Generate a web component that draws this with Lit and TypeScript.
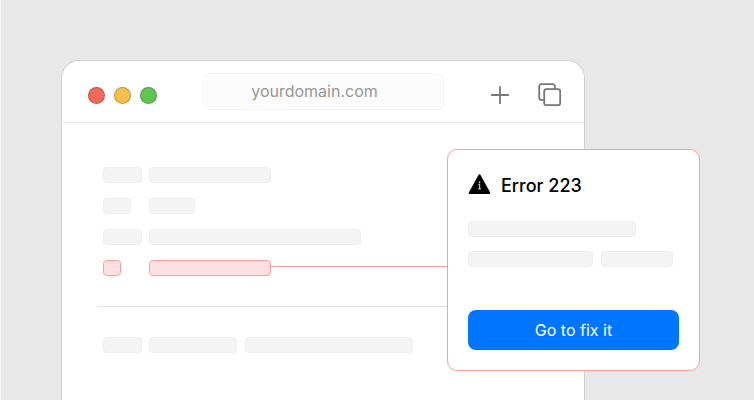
import { LitElement, html, svg, css } from "lit";
import { customElement } from "lit/decorators.js";
import { styleMap } from "lit/directives/style-map.js";

const copyIcon = svg`
  <rect x="6.200" y="6.200" width="16" height="16" rx="2.200"></rect>
  <path d="M6.200 16.900H3.400A2.200 2.200 0 0 1 1.200 14.700V3.400A2.200 2.200 0 0 1 3.400 1.200H14.700A2.200 2.200 0 0 1 16.900 3.400V6.200"></path>
`;

@customElement("app-root")
export class AppRoot extends LitElement {
  static styles = css`
    :host {
      display: flex;
      box-sizing: border-box;
      min-height: 100vh;
      padding: 60px 169px 0 60px;
      background: #e8e8e8;
      border-left: 1px solid #f6f6f6;
      font-family: Inter, "Liberation Sans", sans-serif;
      overflow: hidden;
    }
    * {
      box-sizing: border-box;
    }
    .window {
      position: relative;
      flex: 1;
      min-width: 0;
      background: #fff;
      border: 1px solid #d0d0d0;
      border-bottom: 0;
      border-radius: 18px 18px 0 0;
    }
    .toolbar {
      display: flex;
      align-items: center;
      height: 62px;
      padding: 0 22px 0 26px;
      border-bottom: 1px solid #e9e9e9;
    }
    .lights,
    .tools {
      display: flex;
      align-items: center;
    }
    .lights {
      gap: 9px;
      padding-top: 8px;
    }
    .light {
      width: 17px;
      height: 17px;
      border-radius: 50%;
      border: 1px solid rgba(0, 0, 0, 0.22);
    }
    .close {
      background: #ec6a5e;
    }
    .minimise {
      background: #f4bf4f;
    }
    .zoom {
      background: #61c554;
    }
    .address {
      flex: 1;
      min-width: 0;
      height: 37px;
      margin: 0 46px;
      padding: 0 18px 2px 0;
      border: 1px solid #f5f5f5;
      border-radius: 6px;
      background: #fcfcfc;
      color: #969696;
      font: 400 16px/20px Inter, "Liberation Sans", sans-serif;
      text-align: center;
      outline: none;
    }
    .tools {
      gap: 28px;
      padding-top: 6px;
    }
    .tool {
      display: flex;
      padding: 0;
      border: 0;
      background: none;
      color: #777;
      cursor: pointer;
    }
    .tool svg {
      fill: none;
      stroke: currentColor;
      stroke-width: 1.8;
      stroke-linecap: round;
    }
    .content {
      padding: 44px 0 32px 36px;
    }
    .rows {
      display: flex;
      flex-direction: column;
      gap: 15px;
      padding-left: 5px;
    }
    .row {
      display: flex;
      align-items: center;
    }
    .label {
      flex: none;
      width: 46px;
    }
    .bar {
      flex: none;
      height: 16px;
      border: 1px solid #eee;
      border-radius: 4px;
      background: #f4f4f4;
    }
    .bar + .bar {
      margin-left: 8px;
    }
    .failed .bar {
      border-color: #ff9d9d;
      background: #ffe0e0;
    }
    .connector {
      flex: 1;
      height: 4px;
      border-top: 1px solid #ff9d9d;
    }
    .divider {
      margin: 30px 0;
      border: 0;
      border-top: 1px solid #e2e2e2;
    }
    .popup {
      position: absolute;
      top: 88px;
      right: -116px;
      width: 253px;
      padding: 23px 20px 20px;
      border: 1px solid #ff9d9d;
      border-radius: 10px;
      background: #fff;
    }
    .title {
      display: flex;
      align-items: center;
      gap: 10px;
      margin: 0 0 22px;
      color: #000;
      font-size: 18px;
      line-height: 26px;
      font-weight: 550;
    }
    .title svg {
      margin-bottom: 4px;
    }
    .details {
      display: flex;
      flex-direction: column;
      gap: 14px;
      margin-bottom: 43px;
    }
    .fix {
      display: block;
      width: 100%;
      height: 40px;
      padding: 0;
      border: 0;
      border-radius: 8px;
      background: #0075ff;
      color: #fff;
      font: 400 16px/20px Inter, "Liberation Sans", sans-serif;
      cursor: pointer;
    }
  `;

  private bar(width: number) {
    return html`<div class="bar" style=${styleMap({ width: `${width}px` })}></div>`;
  }

  private row(label: number, values: number[], failed = false) {
    return html`
      <div class="row ${failed ? "failed" : ""}">
        <div class="label">${this.bar(label)}</div>
        ${values.map((v) => this.bar(v))}
        ${failed ? html`<div class="connector"></div>` : ""}
      </div>
    `;
  }

  render() {
    return html`
      <main class="window">
        <header class="toolbar">
          <div class="lights">
            <span class="light close"></span>
            <span class="light minimise"></span>
            <span class="light zoom"></span>
          </div>
          <input class="address" type="text" aria-label="Address" readonly value="yourdomain.com" />
          <div class="tools">
            <button class="tool" aria-label="New tab">
              <svg width="20" height="20" viewBox="0 0 20 20"><path d="M10 1.800V18.200M1.800 10H18.200"></path></svg>
            </button>
            <button class="tool" aria-label="Show tabs">
              <svg width="24" height="24" viewBox="0 0 24 24">${copyIcon}</svg>
            </button>
          </div>
        </header>
        <div class="content">
          <div class="rows">
            ${this.row(39, [122])} ${this.row(28, [46])} ${this.row(39, [212])}
            ${this.row(18, [122], true)}
          </div>
          <hr class="divider" />
          <div class="rows">${this.row(39, [88, 168])}</div>
        </div>
        <section class="popup" role="alertdialog" aria-labelledby="error-title">
          <h2 class="title" id="error-title">
            <svg width="23" height="22" viewBox="0 0 23 22" aria-hidden="true">
              <path d="M11.500 2.300L21.300 20H1.700Z" fill="#000" stroke="#000" stroke-width="2" stroke-linejoin="round"></path>
              <path d="M10.300 11.300H11.700V15.900M10.300 15.900H13.100" fill="none" stroke="#fff" stroke-width="0.900"></path>
              <circle cx="11.500" cy="9.300" r="0.800" fill="#fff"></circle>
            </svg>
            Error 223
          </h2>
          <div class="details">
            <div class="row">${this.bar(168)}</div>
            <div class="row">${this.bar(125)}${this.bar(72)}</div>
          </div>
          <button class="fix">Go to fix it</button>
        </section>
      </main>
    `;
  }
}
